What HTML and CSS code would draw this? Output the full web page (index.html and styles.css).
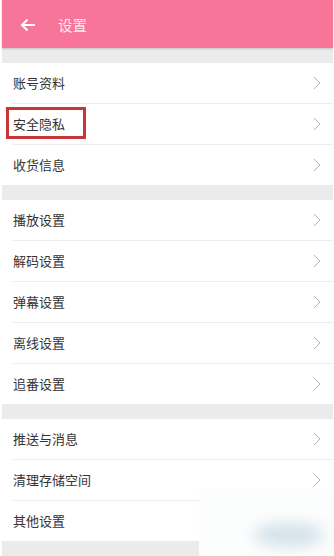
FILE: index.html
```html
<!DOCTYPE html>
<html lang="zh">
<head>
<meta charset="utf-8">
<link rel="stylesheet" href="styles.css">
</head>
<body>
<div class="app">
  <header class="topbar">
    <svg class="back" width="16" height="14" viewBox="0 0 16 14"><path d="M15 7H2M7.5 1.5L2 7l5.5 5.5" fill="none" stroke="#fff" stroke-width="2"/></svg>
    <span class="title">设置</span>
  </header>
  <div class="gap"></div>
  <section class="group">
    <div class="row"><span>账号资料</span><svg class="chev" width="8" height="14" viewBox="0 0 8 14"><polyline points="1,1 7,7 1,13" fill="none" stroke="#b3b3b3" stroke-width="1"/></svg></div>
    <div class="row marked"><span>安全隐私</span><i class="mark"></i><svg class="chev" width="8" height="14" viewBox="0 0 8 14"><polyline points="1,1 7,7 1,13" fill="none" stroke="#b3b3b3" stroke-width="1"/></svg></div>
    <div class="row"><span>收货信息</span><svg class="chev" width="8" height="14" viewBox="0 0 8 14"><polyline points="1,1 7,7 1,13" fill="none" stroke="#b3b3b3" stroke-width="1"/></svg></div>
  </section>
  <div class="gap"></div>
  <section class="group">
    <div class="row"><span>播放设置</span><svg class="chev" width="8" height="14" viewBox="0 0 8 14"><polyline points="1,1 7,7 1,13" fill="none" stroke="#b3b3b3" stroke-width="1"/></svg></div>
    <div class="row"><span>解码设置</span><svg class="chev" width="8" height="14" viewBox="0 0 8 14"><polyline points="1,1 7,7 1,13" fill="none" stroke="#b3b3b3" stroke-width="1"/></svg></div>
    <div class="row"><span>弹幕设置</span><svg class="chev" width="8" height="14" viewBox="0 0 8 14"><polyline points="1,1 7,7 1,13" fill="none" stroke="#b3b3b3" stroke-width="1"/></svg></div>
    <div class="row"><span>离线设置</span><svg class="chev" width="8" height="14" viewBox="0 0 8 14"><polyline points="1,1 7,7 1,13" fill="none" stroke="#b3b3b3" stroke-width="1"/></svg></div>
    <div class="row"><span>追番设置</span><svg class="chev" width="8" height="14" viewBox="0 0 8 14"><polyline points="1,1 7,7 1,13" fill="none" stroke="#b3b3b3" stroke-width="1"/></svg></div>
  </section>
  <div class="gap"></div>
  <section class="group">
    <div class="row"><span>推送与消息</span><svg class="chev" width="8" height="14" viewBox="0 0 8 14"><polyline points="1,1 7,7 1,13" fill="none" stroke="#b3b3b3" stroke-width="1"/></svg></div>
    <div class="row"><span>清理存储空间</span><svg class="chev" width="8" height="14" viewBox="0 0 8 14"><polyline points="1,1 7,7 1,13" fill="none" stroke="#b3b3b3" stroke-width="1"/></svg></div>
    <div class="row"><span>其他设置</span><svg class="chev" width="8" height="14" viewBox="0 0 8 14"><polyline points="1,1 7,7 1,13" fill="none" stroke="#b3b3b3" stroke-width="1"/></svg></div>
  </section>
  <div class="gap tail"></div>
</div>
<div class="watermark"><div class="blob"></div></div>
</body>
</html>
```
FILE: styles.css
```css
html, body {
  margin: 0;
  padding: 0;
  background: #fff;
  height: 100%;
  overflow: hidden;
}
body {
  font-family: "Noto Sans CJK SC", "Noto Sans", sans-serif;
  position: relative;
}
.app {
  margin: 0 1px 0 2px;
}
.topbar {
  height: 48px;
  background: #f8759a;
  display: flex;
  align-items: center;
  padding-left: 18px;
  box-shadow: 0 1px 2px rgba(0,0,0,0.18);
  position: relative;
  z-index: 1;
}
.back {
  display: block;
  margin-top: 1px;
}
.title {
  margin-left: 22px;
  color: rgba(255,255,255,0.85);
  font-size: 14.5px;
  line-height: 20px;
  margin-top: 1px;
}
.gap {
  height: 15px;
  background: #ebebeb;
}
.gap.tail {
  height: 20px;
}
.group {
  background: #fff;
}
.row {
  height: 40px;
  margin-left: 11px;
  padding-right: 12px;
  display: flex;
  align-items: center;
  justify-content: space-between;
  border-bottom: 1px solid #ececec;
  font-size: 13px;
  color: #333;
  position: relative;
}
.row:last-child {
  border-bottom: none;
}
.row span {
  line-height: 18px;
}
.chev {
  display: block;
}
.mark {
  position: absolute;
  left: -7px;
  top: 3px;
  width: 74px;
  height: 26px;
  border: 3.5px solid #c8363a;
}
.watermark {
  position: absolute;
  left: 199px;
  top: 489px;
  width: 135px;
  height: 67px;
  background: rgba(252,253,253,0.96);
  overflow: hidden;
}
.blob {
  position: absolute;
  left: 55px;
  top: 34px;
  width: 70px;
  height: 24px;
  border-radius: 50%;
  background: #d3e2ea;
  filter: blur(7px);
}
```
